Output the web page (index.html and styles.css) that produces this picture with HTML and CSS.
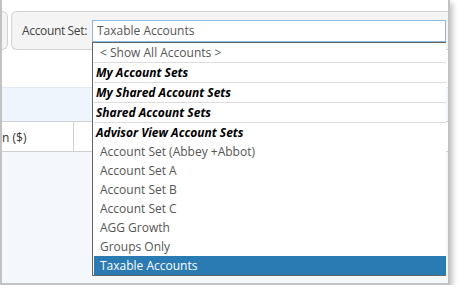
FILE: index.html
```html
<!DOCTYPE html>
<html lang="en">
<head>
    <meta charset="UTF-8">
    <meta name="viewport" content="width=device-width, initial-scale=1.0">
    <title>Account Set</title>
    <link rel="stylesheet" href="styles.css">
</head>
<body>
<div class="frame">
    <div class="toolbar">
        <div class="tool-box tool-box-prev"></div>
        <div class="tool-box account-filter">
            <label for="accountSet">Account Set:</label>
            <div class="combo">
                <div class="combo-input" id="accountSet">Taxable Accounts</div>
                <ul class="combo-list">
                    <li class="option sep">&lt; Show All Accounts &gt;</li>
                    <li class="group sep">My Account Sets</li>
                    <li class="group sep">My Shared Account Sets</li>
                    <li class="group sep">Shared Account Sets</li>
                    <li class="group">Advisor View Account Sets</li>
                    <li class="option">Account Set (Abbey +Abbot)</li>
                    <li class="option">Account Set A</li>
                    <li class="option">Account Set B</li>
                    <li class="option">Account Set C</li>
                    <li class="option">AGG Growth</li>
                    <li class="option">Groups Only</li>
                    <li class="option selected">Taxable Accounts</li>
                </ul>
            </div>
        </div>
    </div>
    <div class="grid">
        <div class="grid-band"></div>
        <div class="grid-head">
            <div class="grid-col first">n ($)</div>
            <div class="grid-col"></div>
        </div>
        <div class="grid-body"></div>
    </div>
</div>
</body>
</html>
```

FILE: styles.css
```css
body {
    margin: 0;
    background: #fff;
    font-family: "Open Sans", Arial, sans-serif;
    font-size: 12px;
    color: #444;
}
.frame {
    width: 446px;
    height: 283px;
    border: 2px solid #c2c2c2;
    border-top: none;
    box-shadow: 3px 3px 5px rgba(0,0,0,0.22);
    display: flex;
    flex-direction: column;
}
.toolbar {
    display: flex;
    height: 87px;
    padding-top: 11px;
    box-sizing: border-box;
}
.tool-box {
    height: 37px;
    border: 1px solid #d2d2d2;
    background: #f4f4f4;
}
.tool-box-prev {
    width: 5px;
    border-left: none;
    border-radius: 0 6px 6px 0;
}
.account-filter {
    flex: 1;
    margin-left: 3px;
    padding-left: 10px;
    border-right: none;
    border-radius: 6px 0 0 6px;
    display: flex;
    align-items: flex-start;
}
label {
    margin-top: 8px;
    margin-right: 5px;
    line-height: 22px;
    letter-spacing: -0.35px;
    color: #444;
}
.combo {
    position: relative;
    flex: 1;
    margin-top: 8px;
    margin-right: 2px;
}
.combo-input {
    height: 20px;
    line-height: 20px;
    padding-left: 4px;
    border: 1px solid #8fb9e0;
    background: #fff;
    color: #555;
}
.combo-list {
    position: absolute;
    top: 100%;
    left: 0;
    right: 0;
    margin: 0;
    padding: 0 0 0 1px;
    list-style: none;
    background: #fff;
    border: 1px solid #666;
    border-right: none;
    z-index: 2;
}
.combo-list li {
    height: 19px;
    line-height: 19px;
    white-space: nowrap;
}
.option {
    padding-left: 6px;
    color: #555;
}
.group {
    padding-left: 2px;
    font-weight: bold;
    font-style: italic;
    color: #000;
}
.combo-list .sep {
    border-bottom: 1px solid #dcdcdc;
}
.combo-list .selected {
    background: #2a7bb4;
    color: #fff;
}
.grid {
    flex: 1;
    display: flex;
    flex-direction: column;
}
.grid-band {
    height: 33px;
    border-top: 1px solid #e2e9f0;
    background: #eef5fc;
}
.grid-head {
    display: flex;
    height: 29px;
    border-top: 1px solid #d0d0d0;
    border-bottom: 1px solid #d0d0d0;
    background: #fff;
}
.grid-col {
    padding-top: 2px;
    line-height: 27px;
    color: #333;
}
.grid-col.first {
    width: 71px;
    border-right: 1px solid #d0d0d0;
}
.grid-body {
    flex: 1;
    background: #f4f8fd;
}
```
